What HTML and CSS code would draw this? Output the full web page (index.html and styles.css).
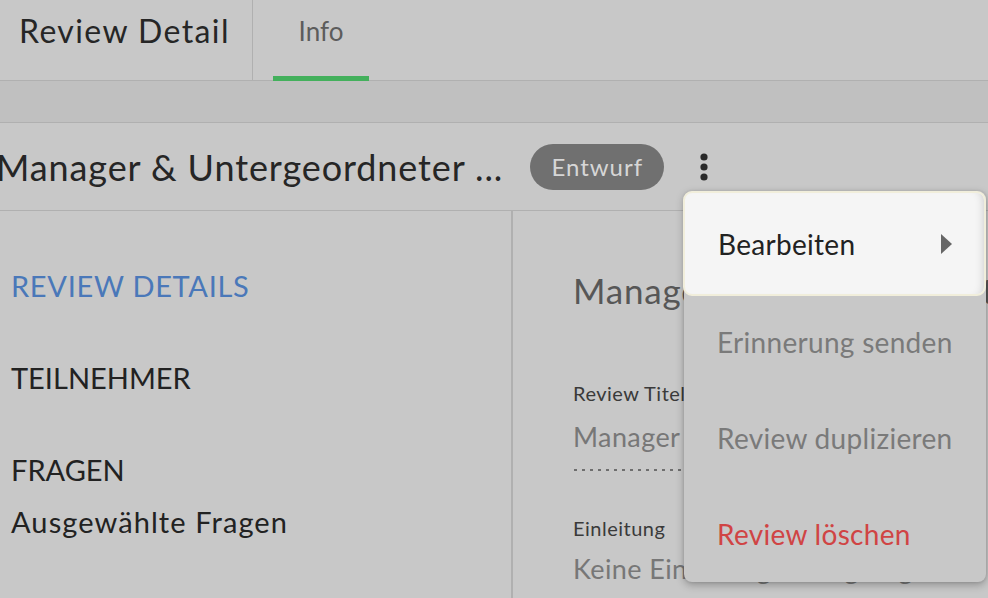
FILE: index.html
```html
<!DOCTYPE html>
<html lang="de">
<head>
<meta charset="utf-8">
<title>Review Detail</title>
<link rel="stylesheet" href="styles.css">
</head>
<body>
<div class="app">
  <header class="topbar">
    <h1 class="page-title">Review Detail</h1>
    <nav class="tabs">
      <a class="tab tab-active">Info</a>
    </nav>
  </header>
  <div class="band"></div>
  <div class="titlebar">
    <h2 class="review-name">Manager &amp; Untergeordneter ...</h2>
    <span class="chip">Entwurf</span>
    <button class="kebab" aria-label="Mehr">
      <svg width="10" height="30" viewBox="0 0 10 30"><circle cx="5" cy="5" r="3.6"/><circle cx="5" cy="15" r="3.6"/><circle cx="5" cy="25" r="3.6"/></svg>
    </button>
  </div>
  <div class="content">
    <aside class="sidenav">
      <a class="nav-item nav-active">REVIEW DETAILS</a>
      <a class="nav-item">TEILNEHMER</a>
      <a class="nav-item">FRAGEN</a>
      <a class="nav-sub">Ausgewählte Fragen</a>
    </aside>
    <main class="detail">
      <h3 class="detail-heading">Manager &amp; Untergeordneter Review</h3>
      <div class="field">
        <div class="field-label">Review Titel</div>
        <div class="field-value dotted">Manager &amp; Untergeordneter Review</div>
      </div>
      <div class="field field-intro">
        <div class="field-label">Einleitung</div>
        <div class="field-value">Keine Einleitung hinzugefügt</div>
      </div>
    </main>
  </div>
  <ul class="menu">
    <li class="menu-item menu-focus"><span>Bearbeiten</span><span class="caret"></span></li>
    <li class="menu-item menu-muted">Erinnerung senden</li>
    <li class="menu-item menu-muted">Review duplizieren</li>
    <li class="menu-item menu-danger">Review löschen</li>
  </ul>
</div>
</body>
</html>
```

FILE: styles.css
```css
* { box-sizing: border-box; }
html, body {
  margin: 0;
  padding: 0;
  background: #c8c8c8;
  font-family: "Lato", "Noto Sans", sans-serif;
  color: #262626;
  overflow: hidden;
}
.app {
  position: relative;
  width: 988px;
  height: 598px;
  overflow: hidden;
}
.topbar {
  display: flex;
  height: 81px;
  border-bottom: 1px solid #b0b0b0;
}
.page-title {
  margin: 0;
  width: 253px;
  padding-left: 19px;
  border-right: 1px solid #b0b0b0;
  font-size: 32px;
  font-weight: 400;
  letter-spacing: 1.4px;
  line-height: 62px;
  color: #262626;
}
.tabs {
  display: flex;
  padding-left: 20px;
}
.tab {
  width: 96px;
  text-align: center;
  font-size: 26px;
  line-height: 62px;
  color: #5c5c5c;
  border-bottom: 5px solid #43b05c;
  margin-bottom: -1px;
  height: 81px;
}
.band {
  height: 42px;
  background: #c0c0c0;
  border-bottom: 1px solid #b0b0b0;
}
.titlebar {
  display: flex;
  align-items: center;
  height: 88px;
  border-bottom: 1px solid #b0b0b0;
}
.review-name {
  margin: 0 0 0 -4px;
  font-size: 36px;
  font-weight: 400;
  letter-spacing: 0.9px;
  color: #262626;
  white-space: nowrap;
}
.chip {
  margin-left: 27px;
  width: 134px;
  height: 46px;
  border-radius: 23px;
  background: #707070;
  color: #d6d6d6;
  font-size: 24px;
  letter-spacing: 1px;
  display: flex;
  align-items: center;
  justify-content: center;
}
.kebab {
  margin-left: 35px;
  padding: 0;
  border: 0;
  background: none;
  width: 10px;
  height: 30px;
  display: flex;
}
.kebab svg { fill: #2a2a2a; }
.content {
  display: flex;
  height: 388px;
}
.sidenav {
  width: 513px;
  border-right: 2px solid #b0b0b0;
  padding: 55px 0 0 11px;
  display: flex;
  flex-direction: column;
}
.nav-item, .nav-sub {
  font-size: 29px;
  line-height: 40px;
  color: #222;
}
.nav-item + .nav-item { margin-top: 52px; }
.nav-active { color: #4a78b9; letter-spacing: 0.7px; }
.nav-sub { margin-top: 12px; letter-spacing: 1.1px; }
.detail {
  flex: 1;
  padding: 57px 0 0 60px;
  white-space: nowrap;
  overflow: hidden;
}
.detail-heading {
  margin: 0;
  font-size: 35px;
  font-weight: 400;
  line-height: 44px;
  letter-spacing: 0.8px;
  color: #575757;
}
.field { margin-top: 69px; }
.field-label {
  font-size: 20px;
  line-height: 24px;
  letter-spacing: 0.5px;
  color: #3a3a3a;
}
.field-value {
  margin-top: 14px;
  font-size: 27px;
  line-height: 36px;
  letter-spacing: 0.4px;
  color: #777;
}
.dotted {
  width: 108px;
  padding-bottom: 16px;
  overflow: hidden;
  background-image: linear-gradient(to right, #6e6e6e 3px, transparent 3px);
  background-size: 8px 2px;
  background-repeat: repeat-x;
  background-position: 1px bottom;
}
.field-intro { margin-top: 45px; }
.field-intro .field-value { margin-top: 11px; }
.menu {
  position: absolute;
  left: 684px;
  top: 191px;
  width: 302px;
  height: 391px;
  margin: 0;
  padding: 0;
  list-style: none;
  background: #c8c8c8;
  border-radius: 8px;
  box-shadow: 0 3px 8px rgba(0,0,0,0.28), 0 0 3px rgba(0,0,0,0.12);
}
.menu-item {
  height: 96px;
  display: flex;
  align-items: center;
  padding: 0 32px 0 33px;
  font-size: 28px;
  letter-spacing: 0.3px;
  white-space: nowrap;
}
.menu-focus {
  height: 105px;
  margin: 0 0 -2px -1px;
  padding-top: 1px;
  justify-content: space-between;
  background: #f5f5f5;
  border: 2px solid #f1eedb;
  border-radius: 9px;
  color: #222;
  position: relative;
  box-shadow: inset -8px 0 10px -8px rgba(0,0,0,0.18);
}
.caret {
  width: 0;
  height: 0;
  border-top: 10px solid transparent;
  border-bottom: 10px solid transparent;
  border-left: 11px solid #666;
}
.menu-muted { color: #7a7a7a; }
.menu-danger { color: #d04444; }
```
